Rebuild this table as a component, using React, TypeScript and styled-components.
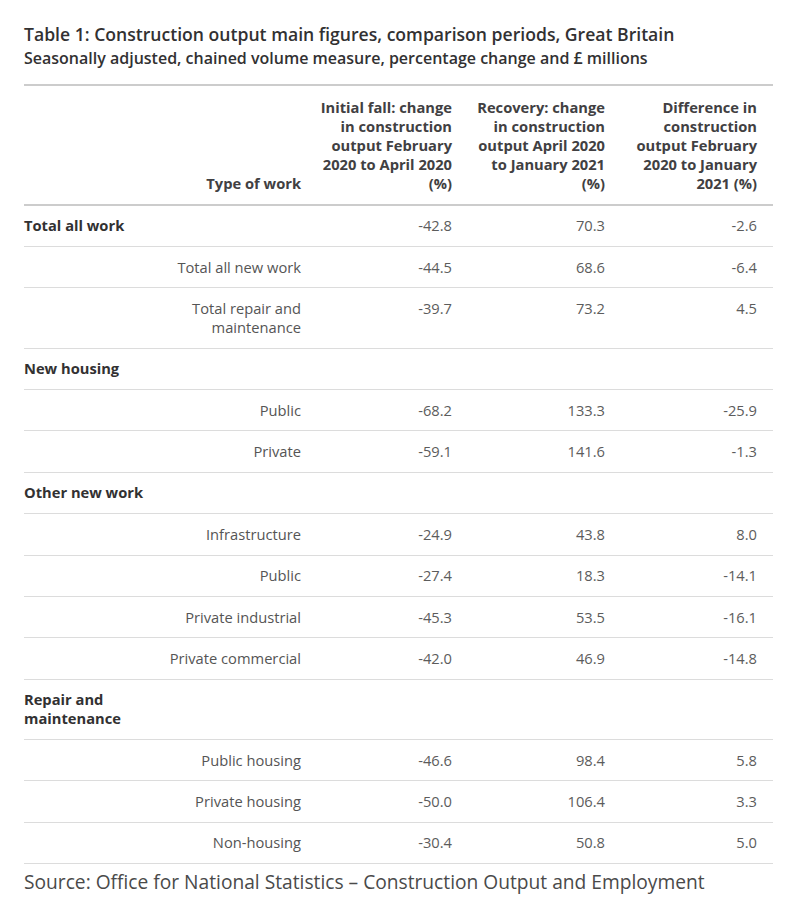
import React from "react";
import styled, { createGlobalStyle } from "styled-components";

const Global = createGlobalStyle`
  html, body { margin: 0; padding: 0; background: #ffffff; }
  body { font-family: "Open Sans", "Liberation Sans", sans-serif; }
`;

const Page = styled.div`
  padding: 22px 19px 0 24px;
  width: 749px;
`;

const Title = styled.h1`
  margin: 0;
  font-size: 17.6px;
  line-height: 24px;
  font-weight: 600;
  color: #323132;
  white-space: nowrap;
`;

const Subtitle = styled.h2`
  margin: 1px 0 0;
  font-size: 16px;
  line-height: 22px;
  font-weight: 600;
  color: #323132;
  white-space: nowrap;
`;

const Table = styled.table`
  margin-top: 15px;
  width: 749px;
  border-collapse: collapse;
  table-layout: fixed;
  font-size: 14.7px;
  line-height: 19px;
`;

const HeadRow = styled.tr`
  border-top: 2px solid #cccccc;
  border-bottom: 2px solid #cccccc;
`;

const Th = styled.th<{ $w: number }>`
  box-sizing: border-box;
  width: ${(p) => p.$w}px;
  padding: 12px 16px 10.5px 0;
  text-align: right;
  vertical-align: bottom;
  font-weight: 700;
  color: #414042;
  white-space: nowrap;
`;

const Row = styled.tr`
  border-bottom: 1px solid #dcdcdc;
`;

const Label = styled.td<{ $group?: boolean }>`
  box-sizing: border-box;
  padding: 10.7px ${(p) => (p.$group ? "0" : "16px")} 10.7px 0;
  text-align: ${(p) => (p.$group ? "left" : "right")};
  vertical-align: top;
  font-weight: ${(p) => (p.$group ? 700 : 400)};
  color: ${(p) => (p.$group ? "#323132" : "#555555")};
`;

const GroupLabel = styled.span`
  display: block;
  max-width: 140px;
`;

const Num = styled.td`
  box-sizing: border-box;
  padding: 10.7px 16px 10.7px 0;
  text-align: right;
  vertical-align: top;
  color: #5c5c5c;
`;

const Source = styled.p`
  margin: 5px 0 0;
  font-size: 19.2px;
  line-height: 26px;
  color: #4a4a4a;
  white-space: nowrap;
`;

type DataRow =
  | { kind: "group"; label: string }
  | { kind: "data"; label: React.ReactNode; a: string; b: string; c: string; bold?: boolean };

const rows: DataRow[] = [
  { kind: "data", label: "Total all work", a: "-42.8", b: "70.3", c: "-2.6", bold: true },
  { kind: "data", label: "Total all new work", a: "-44.5", b: "68.6", c: "-6.4" },
  {
    kind: "data",
    label: (
      <>
        Total repair and
        <br />
        maintenance
      </>
    ),
    a: "-39.7",
    b: "73.2",
    c: "4.5",
  },
  { kind: "group", label: "New housing" },
  { kind: "data", label: "Public", a: "-68.2", b: "133.3", c: "-25.9" },
  { kind: "data", label: "Private", a: "-59.1", b: "141.6", c: "-1.3" },
  { kind: "group", label: "Other new work" },
  { kind: "data", label: "Infrastructure", a: "-24.9", b: "43.8", c: "8.0" },
  { kind: "data", label: "Public", a: "-27.4", b: "18.3", c: "-14.1" },
  { kind: "data", label: "Private industrial", a: "-45.3", b: "53.5", c: "-16.1" },
  { kind: "data", label: "Private commercial", a: "-42.0", b: "46.9", c: "-14.8" },
  { kind: "group", label: "Repair and maintenance" },
  { kind: "data", label: "Public housing", a: "-46.6", b: "98.4", c: "5.8" },
  { kind: "data", label: "Private housing", a: "-50.0", b: "106.4", c: "3.3" },
  { kind: "data", label: "Non-housing", a: "-30.4", b: "50.8", c: "5.0" },
];

export default function App() {
  return (
    <>
      <Global />
      <Page>
        <Title>Table 1: Construction output main figures, comparison periods, Great Britain</Title>
        <Subtitle>Seasonally adjusted, chained volume measure, percentage change and £ millions</Subtitle>
        <Table>
          <thead>
            <HeadRow>
              <Th $w={293}>Type of work</Th>
              <Th $w={151}>
                Initial fall: change
                <br />
                in construction
                <br />
                output February
                <br />
                2020 to April 2020
                <br />
                (%)
              </Th>
              <Th $w={153}>
                Recovery: change
                <br />
                in construction
                <br />
                output April 2020
                <br />
                to January 2021
                <br />
                (%)
              </Th>
              <Th $w={152}>
                Difference in
                <br />
                construction
                <br />
                output February
                <br />
                2020 to January
                <br />
                2021 (%)
              </Th>
            </HeadRow>
          </thead>
          <tbody>
            {rows.map((r, i) =>
              r.kind === "group" ? (
                <Row key={i}>
                  <Label $group>
                    <GroupLabel>{r.label}</GroupLabel>
                  </Label>
                  <Num />
                  <Num />
                  <Num />
                </Row>
              ) : (
                <Row key={i}>
                  <Label $group={r.bold}>{r.label}</Label>
                  <Num>{r.a}</Num>
                  <Num>{r.b}</Num>
                  <Num>{r.c}</Num>
                </Row>
              )
            )}
          </tbody>
        </Table>
        <Source>Source: Office for National Statistics – Construction Output and Employment</Source>
      </Page>
    </>
  );
}
